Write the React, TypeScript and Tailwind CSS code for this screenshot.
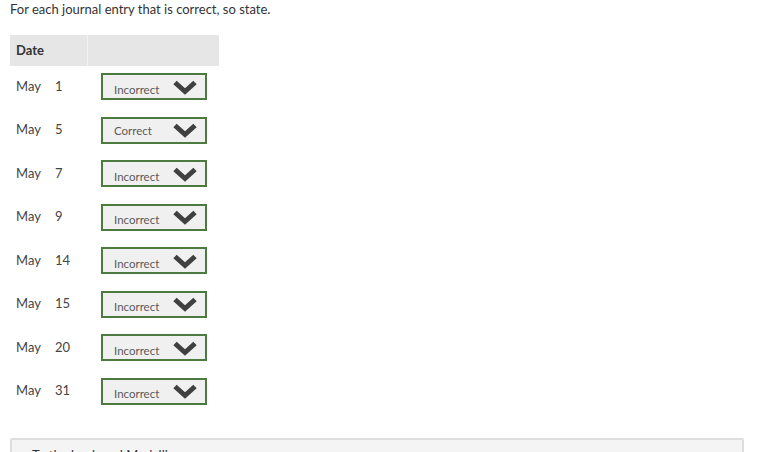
const rows = [
  { day: "1", value: "Incorrect" },
  { day: "5", value: "Correct" },
  { day: "7", value: "Incorrect" },
  { day: "9", value: "Incorrect" },
  { day: "14", value: "Incorrect" },
  { day: "15", value: "Incorrect" },
  { day: "20", value: "Incorrect" },
  { day: "31", value: "Incorrect" },
];

function Chevron() {
  return (
    <svg width="26" height="16" viewBox="0 0 26 16" className="shrink-0">
      <polyline
        points="3,3.5 13,12.5 23,3.5"
        fill="none"
        stroke="#404040"
        strokeWidth="5"
        strokeLinejoin="miter"
      />
    </svg>
  );
}

function App() {
  return (
    <div
      className="relative h-[452px] w-[760px] overflow-hidden bg-white text-[#333]"
      style={{ fontFamily: "Lato, 'Open Sans', sans-serif" }}
    >
      <p className="px-[10px] pt-[1px] text-[13px] leading-[16px]">
        For each journal entry that is correct, so state.
      </p>

      <div className="ml-[10px] mt-[18px] w-[209px]">
        <div className="flex h-[31px] bg-[#e6e6e6]">
          <div className="flex w-[78px] items-center border-r border-[#f2f2f2] pl-[6px] text-[13px] font-bold">
            Date
          </div>
          <div className="flex-1" />
        </div>

        <div className="mt-[7px]">
          {rows.map((row) => (
            <div key={row.day} className="flex h-[43.5px] items-start">
              <div className="flex h-[27px] w-[91px] items-center pl-[6px] text-[13px] text-[#444]">
                <span className="w-[39px]">May</span>
                <span>{row.day}</span>
              </div>
              <div className="flex h-[27px] w-[106px] items-center justify-between border-2 border-[#4c7a3f] bg-[#f0f0f0] pl-[11px] pr-[7px]">
                <span
                  className={`text-[11.5px] text-[#5a5a5a] ${
                    row.value === "Correct" ? "mt-[2px]" : "mt-[6px]"
                  }`}
                >
                  {row.value}
                </span>
                <Chevron />
              </div>
            </div>
          ))}
        </div>
      </div>

      <div className="absolute left-[10px] top-[438px] h-[40px] w-[734px] rounded-[2px] border-2 border-[#dedede] bg-[#f4f4f4] pl-[20px] pt-[6px] text-[13px] text-[#333]">
        To the bank and Medallion
      </div>
    </div>
  );
}

export default App;
